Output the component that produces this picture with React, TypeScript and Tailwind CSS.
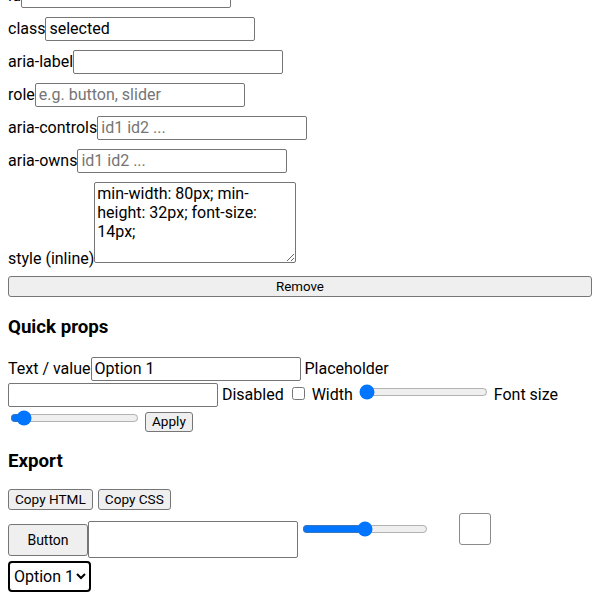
import React from 'react';

// attribute rows of the inspector panel
const fields = [
  { label: 'id', value: '', placeholder: '' },
  { label: 'class', value: 'selected', placeholder: '' },
  { label: 'aria-label', value: '', placeholder: '' },
  { label: 'role', value: '', placeholder: 'e.g. button, slider' },
  { label: 'aria-controls', value: '', placeholder: 'id1 id2 ...' },
  { label: 'aria-owns', value: '', placeholder: 'id1 id2 ...' },
];

const inputCls =
  'w-[210px] h-6 border border-[#767676] rounded-[2px] px-[3px] text-base bg-white placeholder:text-[#757575] outline-none align-baseline';
const btnCls =
  'bg-[#efefef] border border-[#767676] rounded-[3px] px-[6px] text-[13.6px] leading-[17px] text-black';

const App: React.FC = () => {
  return (
    <div className="font-['Roboto',sans-serif] text-base text-black bg-white p-2 -mt-6 min-h-[624px]">
      {/* Attributes */}
      <div className="flex flex-col gap-2">
        {fields.map((f) => (
          <div key={f.label} className="flex items-baseline h-[25px]">
            <label>{f.label}</label>
            <input className={inputCls} defaultValue={f.value} placeholder={f.placeholder} />
          </div>
        ))}
        <div className="flex items-end h-[86px]">
          <label className="leading-[19px]">style (inline)</label>
          <textarea
            className="w-[202px] h-[81px] mb-[5px] border border-[#767676] rounded-[2px] px-[2px] py-[2px] text-base leading-[18.75px] outline-none"
            defaultValue="min-width: 80px; min-height: 32px; font-size: 14px;"
          />
        </div>
        <button className={`${btnCls} w-full h-[21px] text-[13.33px]`}>Remove</button>
      </div>

      {/* Quick props */}
      <h3 className="mt-[19px] mb-[18px] text-[18.72px] font-bold leading-[22px]">Quick props</h3>
      <div className="leading-[19px]">
        Text / value<input className={`${inputCls} my-px`} defaultValue="Option 1" /> Placeholder{' '}
        <input className={`${inputCls} my-px`} /> Disabled{' '}
        <input type="checkbox" className="ml-1 mr-[3px] my-[3px] align-baseline" /> Width{' '}
        <input type="range" defaultValue={0} className="w-[129px] mx-[2px]" /> Font size{' '}
        <input type="range" defaultValue={5} className="w-[129px] mx-[2px] my-[2px]" />{' '}
        <button className={`${btnCls} h-[20px]`}>Apply</button>
      </div>

      {/* Export */}
      <h3 className="mt-[18px] mb-[17px] text-[18.72px] font-bold leading-[22px]">Export</h3>
      <div className="flex items-start gap-[5px]">
        <button className={`${btnCls} h-[21px]`}>Copy HTML</button>
        <button className={`${btnCls} h-[21px]`}>Copy CSS</button>
      </div>

      {/* Canvas preview */}
      <div className="flex items-start mt-[3px]">
        <button className="mt-[11px] min-w-[80px] h-8 bg-[#efefef] border border-[#767676] rounded-[3px] text-sm">
          Button
        </button>
        <input className="mt-2 w-[210px] h-[37px] border border-[#767676] rounded-[2px] bg-white outline-none" />
        <input type="range" defaultValue={50} className="mt-2 ml-[4px] w-[126px]" />
        <div className="ml-[31px] w-8 h-8 border border-[#8a8a8a] rounded-[3px]" />
      </div>
      <select className="mt-[3px] h-[31px] w-[83px] border-2 border-black rounded-[4px] pl-0 text-base">
        <option>Option 1</option>
      </select>
    </div>
  );
};

export default App;
